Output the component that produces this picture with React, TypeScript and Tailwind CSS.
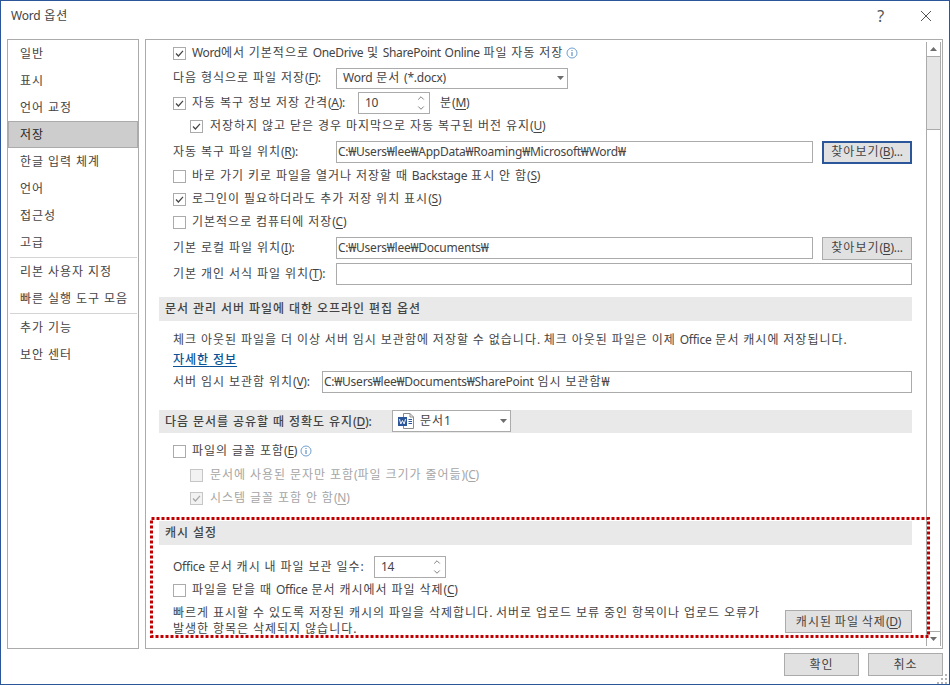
import React from "react";
import { ChevronDown, ChevronUp } from "lucide-react";

const sideTop = ["일반", "표시", "언어 교정", "저장", "한글 입력 체계", "언어", "접근성", "고급"];
const sideMid = ["리본 사용자 지정", "빠른 실행 도구 모음"];
const sideEnd = ["추가 기능", "보안 센터"];

// Hangul in the original runs wider than the CJK fallback here, so hangul runs get extra tracking
const T = ({ s }: { s: string }) => (
  <span className="whitespace-pre">
    {s.split(/([\uAC00-\uD7A3]+)/).map((part, i) =>
      i % 2 === 1 ? (
        <span key={i} className="tracking-[1px]">
          {part}
        </span>
      ) : (
        part
      )
    )}
  </span>
);

// label with its access key: text(K)tail
const L = ({ s, k, tail }: { s: string; k: string; tail?: string }) => (
  <span>
    <T s={s} />(<u className="underline underline-offset-2">{k}</u>){tail}
  </span>
);

const SideItem = ({ label }: { label: string }) => (
  <div
    className={
      label === "저장"
        ? "h-[27px] pl-[11px] flex items-center bg-[#cdcdcd] border border-[#ababab] -ml-px text-[#262626]"
        : "h-[27px] pl-[11px] flex items-center"
    }
  >
    <T s={label} />
  </div>
);

const Check = ({ on, off }: { on?: boolean; off?: boolean }) => (
  <span
    className={
      off
        ? "w-[13px] h-[13px] shrink-0 border border-[#c6c6c6] bg-[#f2f2f2] flex items-center justify-center"
        : "w-[13px] h-[13px] shrink-0 border border-[#ababab] bg-white flex items-center justify-center"
    }
  >
    {on && (
      <svg width="9" height="9" viewBox="0 0 9 9" fill="none">
        <path d="M1 4.5 L3.4 7 L8 1.8" stroke={off ? "#a6a6a6" : "#444444"} strokeWidth="1.2" />
      </svg>
    )}
  </span>
);

const Info = () => (
  <svg width="12" height="12" viewBox="0 0 12 12" fill="none" className="shrink-0 -ml-[3px]">
    <circle cx="6" cy="6" r="5" stroke="#6f9fd0" strokeWidth="1" />
    <rect x="5.5" y="5" width="1" height="4" fill="#3f7fbf" />
    <rect x="5.5" y="3" width="1" height="1" fill="#3f7fbf" />
  </svg>
);

const Caret = () => (
  <svg width="7" height="4" viewBox="0 0 7 4" className="shrink-0">
    <path d="M0 0 H7 L3.5 4 Z" fill="#6d6d6d" />
  </svg>
);

const Spin = ({ value }: { value: string }) => (
  <div className="w-[72px] h-[22px] border border-[#ababab] flex items-center pl-[6px] pr-[3px] bg-white">
    <span className="flex-1">{value}</span>
    <span className="flex flex-col text-[#666666]">
      <ChevronUp size={10} strokeWidth={2} />
      <ChevronDown size={10} strokeWidth={2} />
    </span>
  </div>
);

const PathInput = ({ value, wide }: { value?: string; wide?: boolean }) => (
  <div
    className={
      wide
        ? "w-[576px] h-[22px] border border-[#ababab] bg-white flex items-center pl-[1px] whitespace-pre"
        : "w-[477px] h-[22px] border border-[#ababab] bg-white flex items-center pl-[1px] whitespace-pre"
    }
  >
    {value}
  </div>
);

const Section = ({ children }: { children: React.ReactNode }) => (
  <div className="h-[24px] -ml-[14px] pl-[6px] bg-[#e9e9e9] flex items-center font-medium text-[#444444]">{children}</div>
);

const App = () => {
  return (
    <div className="relative w-[950px] h-[685px] bg-white border border-[#2b579a] overflow-hidden flex flex-col text-[12px] leading-none text-[#444444] tracking-[-0.25px] [word-spacing:1px] [font-family:'Noto_Sans','Noto_Sans_CJK_KR',sans-serif]">
      {/* title bar */}
      <div className="h-[38px] shrink-0 flex items-center pl-[10px] pb-[9px]">
        <span className="flex-1">
          <T s="Word 옵션" />
        </span>
        <span className="text-[16px] mr-[36px] text-[#555555]">?</span>
        <svg width="12" height="12" viewBox="0 0 12 12" className="mr-[17px]" fill="none">
          <path d="M1 1 L11 11 M11 1 L1 11" stroke="#555555" strokeWidth="1" />
        </svg>
      </div>

      <div className="flex-1 flex pl-[6px] pr-[6px] gap-[6px] min-h-0">
        {/* category list */}
        <div className="w-[132px] h-[610px] border border-[#ababab] pl-px">
          {sideTop.map((s) => (
            <SideItem key={s} label={s} />
          ))}
          <div className="h-px bg-[#d4d4d4] mx-[1px] mt-[1px]" />
          {sideMid.map((s) => (
            <SideItem key={s} label={s} />
          ))}
          <div className="h-px bg-[#d4d4d4] mx-[1px] mt-[1px]" />
          {sideEnd.map((s) => (
            <SideItem key={s} label={s} />
          ))}
        </div>

        {/* settings panel */}
        <div className="w-[798px] h-[610px] border border-[#ababab] flex">
          <div className="w-[780px] pl-[27px] pr-[14px] pt-[3px] flex flex-col overflow-hidden">
            <div className="h-5 flex items-center gap-[6px] whitespace-nowrap tracking-[-0.35px]">
              <Check on />
              <T s="Word에서 기본적으로 OneDrive 및 SharePoint Online 파일 자동 저장" />
              <Info />
            </div>
            <div className="h-5 mt-[5px] flex items-center whitespace-nowrap">
              <span className="w-[163px]">
                <L s="다음 형식으로 파일 저장" k="F" tail=":" />
              </span>
              <div className="w-[232px] h-[21px] border border-[#ababab] flex items-center pl-[6px] pr-[3px]">
                <span className="flex-1">
                  <T s="Word 문서 (*.docx)" />
                </span>
                <Caret />
              </div>
            </div>
            <div className="h-5 mt-[5px] flex items-center whitespace-nowrap">
              <Check on />
              <span className="ml-[6px] w-[166px]">
                <L s="자동 복구 정보 저장 간격" k="A" tail=":" />
              </span>
              <Spin value="10" />
              <span className="ml-[10px]">
                <L s="분" k="M" />
              </span>
            </div>
            <div className="h-5 mt-[3px] pl-[17px] flex items-center gap-[7px] whitespace-nowrap">
              <Check on />
              <L s="저장하지 않고 닫은 경우 마지막으로 자동 복구된 버전 유지" k="U" />
            </div>
            <div className="h-5 mt-[6px] flex items-center whitespace-nowrap">
              <span className="w-[163px]">
                <L s="자동 복구 파일 위치" k="R" tail=":" />
              </span>
              <PathInput value="C:₩Users₩lee₩AppData₩Roaming₩Microsoft₩Word₩" />
              <button className="ml-[9px] w-[90px] h-[23px] bg-[#e1e1e1] border-2 border-[#2b579a] text-center whitespace-nowrap">
                <L s="찾아보기" k="B" tail="..." />
              </button>
            </div>
            <div className="h-5 mt-[4px] flex items-center gap-[6px] whitespace-nowrap">
              <Check />
              <L s="바로 가기 키로 파일을 열거나 저장할 때 Backstage 표시 안 함" k="S" />
            </div>
            <div className="h-5 mt-[3px] flex items-center gap-[6px] whitespace-nowrap">
              <Check on />
              <L s="로그인이 필요하더라도 추가 저장 위치 표시" k="S" />
            </div>
            <div className="h-5 mt-[3px] flex items-center gap-[6px] whitespace-nowrap">
              <Check />
              <L s="기본적으로 컴퓨터에 저장" k="C" />
            </div>
            <div className="h-5 mt-[6px] flex items-center whitespace-nowrap">
              <span className="w-[163px]">
                <L s="기본 로컬 파일 위치" k="I" tail=":" />
              </span>
              <PathInput value="C:₩Users₩lee₩Documents₩" />
              <button className="ml-[9px] w-[90px] h-[23px] bg-[#e1e1e1] border border-[#ababab] text-center whitespace-nowrap">
                <L s="찾아보기" k="B" tail="..." />
              </button>
            </div>
            <div className="h-5 mt-[6px] flex items-center whitespace-nowrap">
              <span className="w-[163px]">
                <L s="기본 개인 서식 파일 위치" k="T" tail=":" />
              </span>
              <PathInput wide />
            </div>

            <div className="mt-[13px]">
              <Section>
                <T s="문서 관리 서버 파일에 대한 오프라인 편집 옵션" />
              </Section>
            </div>
            <div className="h-5 mt-[9px] flex items-center whitespace-nowrap">
              <T s="체크 아웃된 파일을 더 이상 서버 임시 보관함에 저장할 수 없습니다. 체크 아웃된 파일은 이제 Office 문서 캐시에 저장됩니다." />
            </div>
            <div className="h-5 flex items-center whitespace-nowrap">
              <span className="text-[#0b5394] underline underline-offset-2 font-medium">
                <T s="자세한 정보" />
              </span>
            </div>
            <div className="h-5 mt-[2px] flex items-center whitespace-nowrap">
              <span className="w-[149px]">
                <L s="서버 임시 보관함 위치" k="V" tail=":" />
              </span>
              <div className="w-[590px] h-[22px] border border-[#ababab] flex items-center pl-[1px] whitespace-pre">
                <T s="C:₩Users₩lee₩Documents₩SharePoint 임시 보관함₩" />
              </div>
            </div>

            <div className="mt-[18px]">
              <div className="h-[23px] -ml-[14px] pl-[6px] bg-[#e9e9e9] flex items-center font-medium whitespace-nowrap">
                <span className="w-[227px]">
                  <L s="다음 문서를 공유할 때 정확도 유지" k="D" tail=":" />
                </span>
                <div className="w-[119px] h-[22px] self-start bg-white border border-[#ababab] flex items-center pl-[5px] pr-[3px] font-normal">
                  <svg width="17" height="16" viewBox="0 0 17 16" className="shrink-0 mr-[5px]">
                    <path d="M5.5 0.5 H12 L15.5 4 V15.5 H5.5 Z" fill="#ffffff" stroke="#8a8a8a" />
                    <path d="M12 0.5 V4 H15.5" fill="none" stroke="#8a8a8a" />
                    <rect x="0" y="4" width="9" height="9" fill="#2b579a" />
                    <path d="M1.5 6 L2.8 11 L4.5 7.5 L6.2 11 L7.5 6" fill="none" stroke="#ffffff" strokeWidth="0.9" />
                    <path d="M10.5 6.5 H14 M10.5 8.5 H14 M10.5 10.5 H14" stroke="#2b579a" />
                  </svg>
                  <span className="flex-1">
                    <T s="문서1" />
                  </span>
                  <Caret />
                </div>
              </div>
            </div>
            <div className="h-5 mt-[8px] flex items-center gap-[6px] whitespace-nowrap">
              <Check />
              <L s="파일의 글꼴 포함" k="E" />
              <Info />
            </div>
            <div className="h-5 mt-[4px] pl-[17px] flex items-center gap-[7px] whitespace-nowrap text-[#a6a6a6]">
              <Check off />
              <L s="문서에 사용된 문자만 포함(파일 크기가 줄어듦)" k="C" />
            </div>
            <div className="h-5 mt-[3px] pl-[17px] flex items-center gap-[7px] whitespace-nowrap text-[#a6a6a6]">
              <Check on off />
              <L s="시스템 글꼴 포함 안 함" k="N" />
            </div>

            <div className="mt-[13px]">
              <Section>
                <T s="캐시 설정" />
              </Section>
            </div>
            <div className="h-5 mt-[12px] flex items-center whitespace-nowrap">
              <span className="w-[201px]">
                <T s="Office 문서 캐시 내 파일 보관 일수:" />
              </span>
              <Spin value="14" />
            </div>
            <div className="h-5 mt-[3px] flex items-center gap-[6px] whitespace-nowrap">
              <Check />
              <L s="파일을 닫을 때 Office 문서 캐시에서 파일 삭제" k="C" />
            </div>
            <div className="mt-[5px] flex items-start justify-between">
              <p className="w-[600px] leading-[16px]">
                <T s="빠르게 표시할 수 있도록 저장된 캐시의 파일을 삭제합니다. 서버로 업로드 보류 중인 항목이나 업로드 오류가" />
                <br />
                <T s="발생한 항목은 삭제되지 않습니다." />
              </p>
              <button className="mt-[5px] w-[127px] h-[23px] bg-[#e1e1e1] border border-[#ababab] whitespace-nowrap">
                <L s="캐시된 파일 삭제" k="D" />
              </button>
            </div>
          </div>

          {/* scrollbar */}
          <div className="w-[15px] mt-[2px] mb-[2px] flex flex-col bg-[#e6e6e6] border-x border-[#ababab]">
            <div className="h-[15px] bg-white border-b border-[#ababab] flex items-center justify-center">
              <svg width="7" height="4" viewBox="0 0 7 4">
                <path d="M0 4 H7 L3.5 0 Z" fill="#6d6d6d" />
              </svg>
            </div>
            <div className="h-[72px]" />
            <div className="flex-1 bg-white border-t border-[#ababab]" />
            <div className="h-[15px] bg-white border-t border-[#ababab] flex items-center justify-center">
              <svg width="7" height="4" viewBox="0 0 7 4">
                <path d="M0 0 H7 L3.5 4 Z" fill="#6d6d6d" />
              </svg>
            </div>
          </div>
        </div>
      </div>

      {/* dialog buttons */}
      <div className="h-[35px] shrink-0 flex items-start justify-end gap-[9px] pt-[4px] pr-[6px]">
        <button className="w-[75px] h-[23px] bg-[#e1e1e1] border border-[#ababab]">
          <T s="확인" />
        </button>
        <button className="w-[75px] h-[23px] bg-[#e1e1e1] border border-[#ababab]">
          <T s="취소" />
        </button>
      </div>

      {/* red annotation drawn on top of the screenshot */}
      <svg width="782" height="124" className="absolute left-[148px] top-[514px] pointer-events-none" fill="none">
        <rect x="2.5" y="3.5" width="777" height="118" stroke="#c00000" strokeWidth="3" strokeDasharray="3 2" />
      </svg>

      {/* resize grip */}
      <svg width="12" height="12" viewBox="0 0 12 12" className="absolute right-0 bottom-0">
        <path d="M8 2h2v2H8zM4 6h2v2H4zM8 6h2v2H8zM0 10h2v2H0zM4 10h2v2H4zM8 10h2v2H8z" fill="#b5b5b5" />
      </svg>
    </div>
  );
};

export default App;
